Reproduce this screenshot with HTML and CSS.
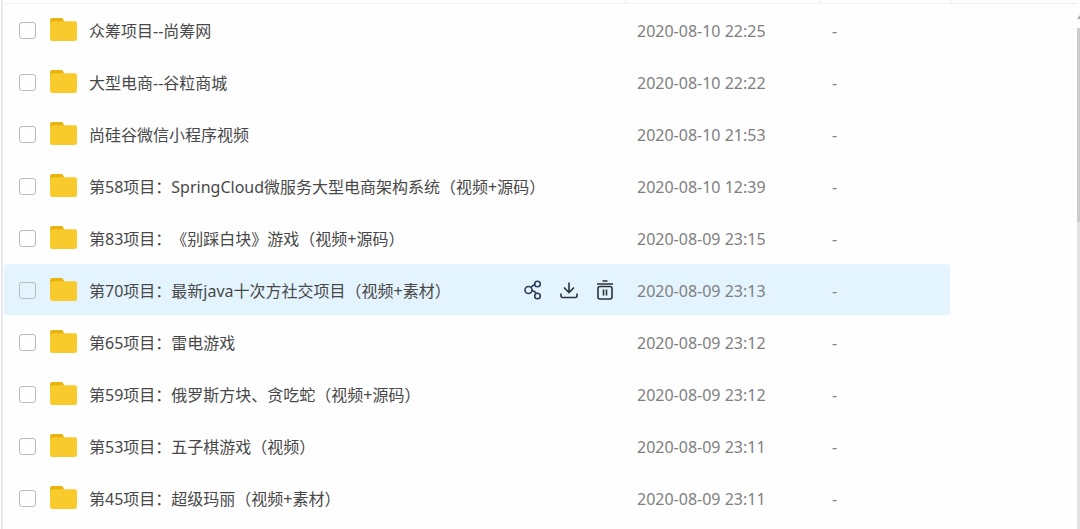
FILE: index.html
```html
<!DOCTYPE html>
<html lang="zh-CN">
<head>
  <meta charset="UTF-8" />
  <meta name="viewport" content="width=device-width, initial-scale=1.0" />
  <title>文件列表</title>
  <link rel="stylesheet" href="styles.css">
</head>
<body>
  <svg class="symbols" aria-hidden="true">
    <symbol id="folder" viewBox="0 0 26 22">
      <path d="M0 7V2Q0 0 2 0h9q1 0 1.500 1l1.500 3v4z" fill="#e8b30d" />
      <path d="M0 5q0-2 2-2h22q2 0 2 2v15q0 2-2 2H2q-2 0-2-2z" fill="#f8ca2c" />
    </symbol>
  </svg>

  <div class="page">
    <main class="files">
      <div class="head">
        <span class="head-name"></span>
        <span class="head-date"></span>
        <span class="head-size"></span>
      </div>
      <table class="file-table">
        <colgroup>
          <col>
          <col class="col-date">
          <col class="col-size">
        </colgroup>
        <tbody>
          <tr>
            <td><div class="name"><input type="checkbox" id="f1"><svg class="folder"><use href="#folder" /></svg><label for="f1">众筹项目--尚筹网</label></div></td>
            <td class="date">2020-08-10 22:25</td>
            <td class="size">-</td>
          </tr>
          <tr>
            <td><div class="name"><input type="checkbox" id="f2"><svg class="folder"><use href="#folder" /></svg><label for="f2">大型电商--谷粒商城</label></div></td>
            <td class="date">2020-08-10 22:22</td>
            <td class="size">-</td>
          </tr>
          <tr>
            <td><div class="name"><input type="checkbox" id="f3"><svg class="folder"><use href="#folder" /></svg><label for="f3">尚硅谷微信小程序视频</label></div></td>
            <td class="date">2020-08-10 21:53</td>
            <td class="size">-</td>
          </tr>
          <tr>
            <td><div class="name"><input type="checkbox" id="f4"><svg class="folder"><use href="#folder" /></svg><label for="f4">第58项目：SpringCloud微服务大型电商架构系统（视频+源码）</label></div></td>
            <td class="date">2020-08-10 12:39</td>
            <td class="size">-</td>
          </tr>
          <tr>
            <td><div class="name"><input type="checkbox" id="f5"><svg class="folder"><use href="#folder" /></svg><label for="f5">第83项目：《别踩白块》游戏（视频+源码）</label></div></td>
            <td class="date">2020-08-09 23:15</td>
            <td class="size">-</td>
          </tr>
          <tr class="active">
            <td>
              <div class="name">
                <input type="checkbox" id="f6"><svg class="folder"><use href="#folder" /></svg><label for="f6">第70项目：最新java十次方社交项目（视频+素材）</label>
                <div class="actions">
                  <button type="button" class="share" aria-label="分享">
                    <svg viewBox="0 0 18 20">
                      <circle cx="4.500" cy="10" r="3.500" />
                      <circle cx="13.500" cy="4" r="2.800" />
                      <circle cx="13.500" cy="16" r="2.800" />
                      <path d="M7 7.500C8 6 9 5 10.700 4.500M8 10.500c2 .5 3.500 1.500 4.300 3" />
                    </svg>
                  </button>
                  <button type="button" aria-label="下载">
                    <svg viewBox="0 0 18 20">
                      <path d="M9 2.500v10M4 7.500l5 5 5-5M1 13.500v2.500q0 1.500 1.500 1.500h13q1.500 0 1.500-1.500v-2.500" />
                    </svg>
                  </button>
                  <button type="button" aria-label="删除">
                    <svg viewBox="0 0 18 20">
                      <path d="M6.500 1h5M1 4h16M4 6.500h10q2 0 2 2V17q0 2-2 2H4q-2 0-2-2V8.500q0-2 2-2zM7.500 9.500v6M10.500 9.500v6" />
                    </svg>
                  </button>
                </div>
              </div>
            </td>
            <td class="date">2020-08-09 23:13</td>
            <td class="size">-</td>
          </tr>
          <tr>
            <td><div class="name"><input type="checkbox" id="f7"><svg class="folder"><use href="#folder" /></svg><label for="f7">第65项目：雷电游戏</label></div></td>
            <td class="date">2020-08-09 23:12</td>
            <td class="size">-</td>
          </tr>
          <tr>
            <td><div class="name"><input type="checkbox" id="f8"><svg class="folder"><use href="#folder" /></svg><label for="f8">第59项目：俄罗斯方块、贪吃蛇（视频+源码）</label></div></td>
            <td class="date">2020-08-09 23:12</td>
            <td class="size">-</td>
          </tr>
          <tr>
            <td><div class="name"><input type="checkbox" id="f9"><svg class="folder"><use href="#folder" /></svg><label for="f9">第53项目：五子棋游戏（视频）</label></div></td>
            <td class="date">2020-08-09 23:11</td>
            <td class="size">-</td>
          </tr>
          <tr>
            <td><div class="name"><input type="checkbox" id="f10"><svg class="folder"><use href="#folder" /></svg><label for="f10">第45项目：超级玛丽（视频+素材）</label></div></td>
            <td class="date">2020-08-09 23:11</td>
            <td class="size">-</td>
          </tr>
        </tbody>
      </table>
    </main>
    <aside class="side"></aside>
    <div class="scrollbar">
      <svg class="scroll-up" viewBox="0 0 3 4"><path d="M3 0v4H0z" fill="#a8a8a8" /></svg>
      <div class="thumb"></div>
    </div>
  </div>
</body>
</html>
```
FILE: styles.css
```css
* {
  box-sizing: border-box;
}

body {
  margin: 0;
  background: #fefefe;
  font-family: "Noto Sans", "Noto Sans CJK SC", sans-serif;
  font-size: 16px;
  line-height: 24px;
  text-spacing-trim: space-all;
  color: #484848;
}

.symbols {
  display: none;
}

.page {
  display: flex;
  min-height: 100vh;
  border-left: 1px solid #fefefe;
}

.files {
  flex: 1;
  min-width: 0;
  border-left: 2px solid #e6e8ec;
}

.head {
  display: flex;
  height: 4px;
  padding-left: 1px;
  border-bottom: 1px solid #f3f4f6;
}

.head-name {
  flex: 1;
}

.head-date {
  width: 195px;
  border-left: 1px solid #e8eaee;
}

.head-size {
  width: 130px;
  border-left: 1px solid #e8eaee;
}

.file-table {
  width: 100%;
  padding-left: 1px;
  table-layout: fixed;
  border-collapse: separate;
  border-spacing: 0;
}

.col-date {
  width: 195px;
}

.col-size {
  width: 130px;
}

.file-table td {
  height: 52px;
  padding: 0 11px;
  border-bottom: 1px solid #fefefe;
  background-clip: padding-box;
  white-space: nowrap;
}

.file-table td:first-child {
  padding-left: 15px;
}

.active td {
  background-color: #e4f4fe;
}

.active td:first-child {
  border-radius: 4px 0 0 4px;
}

.active td:last-child {
  border-radius: 0 4px 4px 0;
}

.name {
  display: flex;
  align-items: center;
}

.name input {
  appearance: none;
  flex: none;
  width: 17px;
  height: 17px;
  margin: 2px 14px 0 0;
  border: 1px solid #bcbcbc;
  border-radius: 3px;
}

.name input:checked {
  background: #06a7ff;
  border-color: #06a7ff;
}

.name label {
  padding-top: 2px;
}

.folder {
  flex: none;
  width: 27px;
  height: 23px;
  margin-right: 12px;
}

.actions {
  display: flex;
  gap: 18px;
  margin-left: auto;
}

.actions button {
  width: 18px;
  height: 20px;
  padding: 0;
  border: none;
  background: none;
  color: #2b3238;
  cursor: pointer;
}

.actions .share {
  color: #2d3c5c;
}

.actions svg {
  display: block;
  width: 18px;
  height: 20px;
  fill: none;
  stroke: currentColor;
  stroke-width: 1.6;
}

.file-table .date,
.file-table .size {
  padding-top: 2px;
  padding-left: 12px;
  color: #808080;
}

.side {
  width: 127px;
  height: 4px;
  border-left: 1px solid #e8eaee;
  border-bottom: 1px solid #eeeff3;
}

.scrollbar {
  width: 3px;
  padding-top: 15px;
  background: linear-gradient(#fefefe 28px, #e2e2e2 28px);
}

.scroll-up {
  display: block;
  width: 3px;
  height: 4px;
}

.thumb {
  height: 194px;
  margin-top: 9px;
  border-radius: 3px 0 0 0;
  background: #cacbcb;
}
```
